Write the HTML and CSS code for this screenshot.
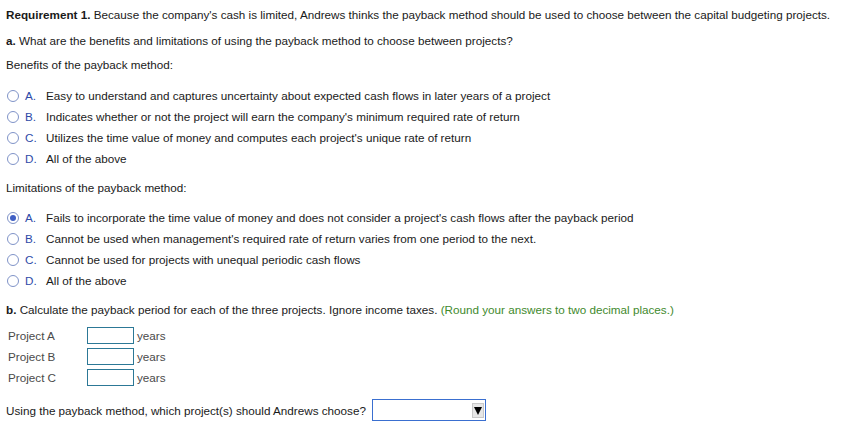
FILE: index.html
```html
<!DOCTYPE html>
<html>
<head>
<meta charset="utf-8">
<link rel="stylesheet" href="styles.css">
</head>
<body>
<div class="page">
  <p class="line l1"><b>Requirement 1.</b> Because the company's cash is limited, Andrews thinks the payback method should be used to choose between the capital budgeting projects.</p>
  <p class="line l2"><b>a.</b> What are the benefits and limitations of using the payback method to choose between projects?</p>
  <p class="line l3">Benefits of the payback method:</p>
  <ul class="opts opts1">
    <li class="opt"><span class="radio"></span><span class="letter">A.</span><span>Easy to understand and captures uncertainty about expected cash flows in later years of a project</span></li>
    <li class="opt"><span class="radio"></span><span class="letter">B.</span><span>Indicates whether or not the project will earn the company's minimum required rate of return</span></li>
    <li class="opt"><span class="radio"></span><span class="letter">C.</span><span>Utilizes the time value of money and computes each project's unique rate of return</span></li>
    <li class="opt"><span class="radio"></span><span class="letter">D.</span><span>All of the above</span></li>
  </ul>
  <p class="line l4">Limitations of the payback method:</p>
  <ul class="opts opts2">
    <li class="opt"><span class="radio checked"></span><span class="letter">A.</span><span>Fails to incorporate the time value of money and does not consider a project's cash flows after the payback period</span></li>
    <li class="opt"><span class="radio"></span><span class="letter">B.</span><span>Cannot be used when management's required rate of return varies from one period to the next.</span></li>
    <li class="opt"><span class="radio"></span><span class="letter">C.</span><span>Cannot be used for projects with unequal periodic cash flows</span></li>
    <li class="opt"><span class="radio"></span><span class="letter">D.</span><span>All of the above</span></li>
  </ul>
  <p class="line l5"><b>b.</b> Calculate the payback period for each of the three projects. Ignore income taxes. <span class="hint">(Round your answers to two decimal places.)</span></p>
  <div class="table">
    <div class="row"><span class="plabel">Project A</span><span class="box"></span><span class="unit">years</span></div>
    <div class="row"><span class="plabel">Project B</span><span class="box"></span><span class="unit">years</span></div>
    <div class="row"><span class="plabel">Project C</span><span class="box"></span><span class="unit">years</span></div>
  </div>
  <div class="choose"><span>Using the payback method, which project(s) should Andrews choose?</span><span class="select"><span class="arrow"></span></span></div>
</div>
</body>
</html>
```
FILE: styles.css
```css
html, body {
  margin: 0;
  padding: 0;
  background: #fff;
}
body {
  font-family: "Liberation Sans", Arial, sans-serif;
  font-size: 11.7px;
  color: #1a1a1a;
}
.page {
  padding: 7px 0 0 6px;
}
.line {
  margin: 0;
  line-height: 16px;
  white-space: nowrap;
}
.l2 { margin-top: 10px; }
.l3 { margin-top: 8px; }
.opts {
  list-style: none;
  margin: 0;
  padding: 0;
}
.opts1 { margin-top: 12px; }
.opt {
  display: flex;
  align-items: center;
  height: 21px;
  white-space: nowrap;
}
.radio {
  width: 10px;
  height: 10px;
  border: 1px solid #7f93c8;
  border-radius: 50%;
  margin-left: 1px;
  margin-right: 6px;
  box-sizing: content-box;
  position: relative;
  flex: none;
}
.radio.checked::after {
  content: "";
  position: absolute;
  left: 2px;
  top: 2px;
  width: 6px;
  height: 6px;
  border-radius: 50%;
  background: #3f5fc4;
}
.letter {
  color: #2d4aa8;
  width: 21px;
  flex: none;
}
.l4 { margin-top: 11px; }
.opts2 { margin-top: 11px; }
.l5 { margin-top: 11px; }
.hint { color: #3f8a2e; }
.table {
  margin-top: 7px;
  padding-left: 2px;
}
.row {
  display: flex;
  align-items: center;
  height: 21px;
}
.plabel {
  width: 79px;
  color: #4a4a4a;
}
.box {
  width: 45px;
  height: 15px;
  border: 1px solid #2c7896;
  margin-right: 3px;
}
.unit {
  color: #4a4a4a;
}
.choose {
  display: flex;
  align-items: center;
  margin-top: 11px;
  white-space: nowrap;
}
.select {
  display: inline-block;
  width: 112px;
  height: 20px;
  border: 1px solid #3a6fd0;
  margin-left: 6px;
  position: relative;
  flex: none;
}
.arrow {
  position: absolute;
  right: 1px;
  top: 3px;
  width: 12px;
  height: 15px;
  background: #e6e6e6;
  border: 1px solid #c8c8c8;
  box-sizing: border-box;
}
.arrow::after {
  content: "";
  position: absolute;
  left: 1px;
  top: 3px;
  border-left: 4.5px solid transparent;
  border-right: 4.5px solid transparent;
  border-top: 8px solid #000;
}
```
